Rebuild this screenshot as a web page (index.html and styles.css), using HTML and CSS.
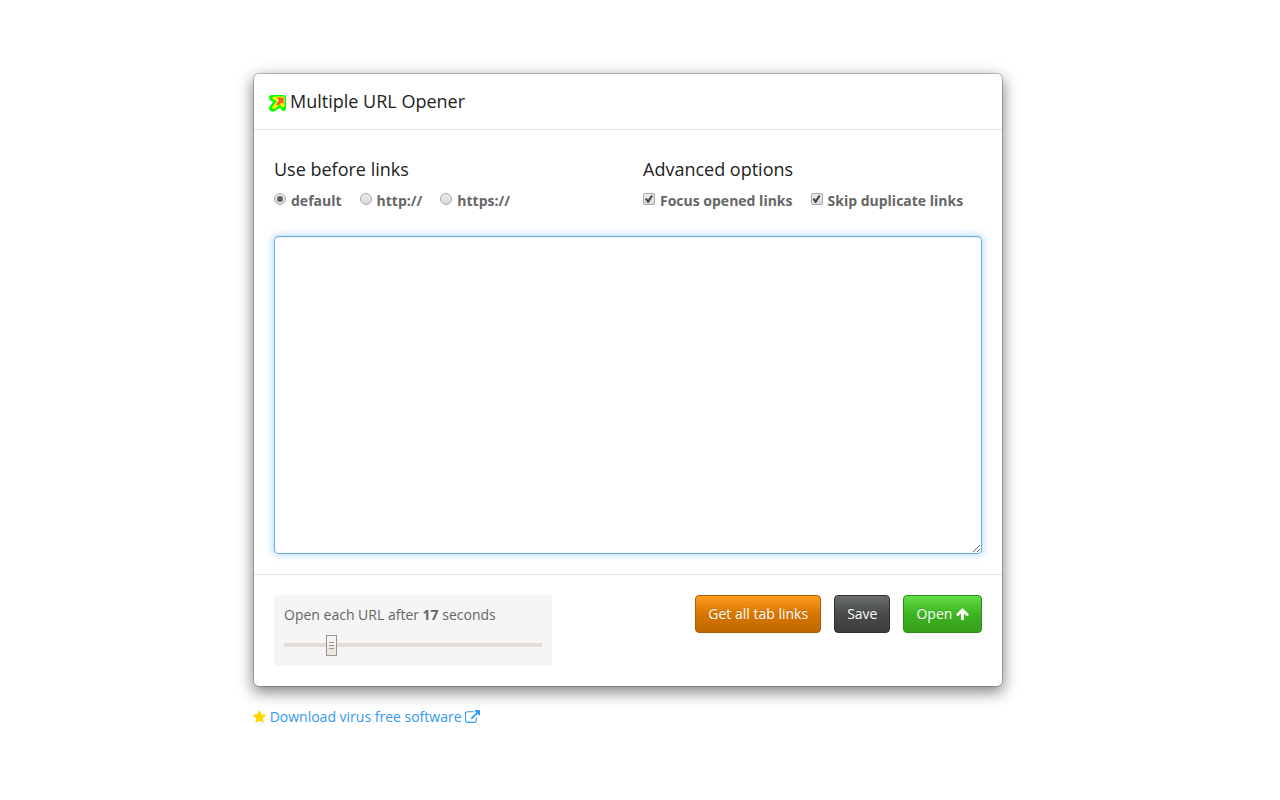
FILE: index.html
```
<!DOCTYPE html>
<html lang="en">
<head>
<meta charset="utf-8">
<title>Multiple URL Opener</title>
<link rel="stylesheet" href="styles.css">
</head>
<body>
<main class="page">
  <form class="dialog">
    <header class="dialog-header">
      <svg class="logo" viewBox="0 0 17 17" aria-hidden="true">
        <path fill="#0f0" d="M3 0H14Q17 0 17 3V13Q17 16 14.500 16Q12 16 11.500 12.500L6 16Q3 17.500 1 15.500Q-1 13 1 11L4.500 6.500Q0 6 0 3Q0 0 3 0Z"/>
        <path fill="#ff0" d="M4.500 1.500H15.500V11.500Q14 13 12.500 11.500L11.500 9.500L5.500 14Q3.500 14.500 3 12.500L8 6L4.500 4.500Q2.500 3 4.500 1.500Z"/>
        <path fill="#ff5038" d="M8 2.500H14.500V9L12.500 7.500L9.500 10.500L7 9.500L10 5.500Z"/>
      </svg>
      <h1 class="title">Multiple URL Opener</h1>
    </header>
    <div class="dialog-body">
      <div class="options">
        <fieldset class="group">
          <legend class="title">Use before links</legend>
          <div class="choices">
            <label class="choice"><input class="radio" type="radio" name="prefix" checked>default</label>
            <label class="choice"><input class="radio" type="radio" name="prefix">http://</label>
            <label class="choice"><input class="radio" type="radio" name="prefix">https://</label>
          </div>
        </fieldset>
        <fieldset class="group">
          <legend class="title">Advanced options</legend>
          <div class="choices">
            <label class="choice"><input class="check" type="checkbox" checked>Focus opened links</label>
            <label class="choice"><input class="check" type="checkbox" checked>Skip duplicate links</label>
          </div>
        </fieldset>
      </div>
      <textarea class="links" aria-label="Links"></textarea>
    </div>
    <footer class="dialog-footer">
      <div class="delay">
        <label for="delay">Open each URL after <strong>17</strong> seconds</label>
        <input class="slider" id="delay" type="range" min="0" max="100" value="17">
      </div>
      <div class="actions">
        <button class="btn btn-orange" type="button">Get all tab links</button>
        <button class="btn btn-dark" type="button">Save</button>
        <button class="btn btn-green" type="button">Open <svg class="icon-up" viewBox="53 150 1558 1514" aria-hidden="true"><path fill="currentColor" d="M1611 971q0 51-37 90l-75 75q-38 38-91 38-54 0-90-38l-294-293v704q0 52-37.500 84.500t-90.500 32.500h-128q-53 0-90.500-32.500t-37.500-84.500v-704l-294 293q-36 38-90 38t-90-38l-75-75q-38-38-38-90 0-53 38-91l651-651q35-37 90-37 54 0 91 37l651 651q37 39 37 91z"/></svg></button>
      </div>
    </footer>
  </form>
  <p class="promo">
    <svg class="icon-star" viewBox="0 32 1664 1587" aria-hidden="true"><path fill="gold" d="M1664 647q0 22-26 48l-363 354 86 500q1 7 1 20 0 21-10.500 35.500t-30.500 14.500q-19 0-40-12l-449-236-449 236q-22 12-40 12-21 0-31.500-14.500t-10.500-35.500q0-6 2-20l86-500-364-354q-25-27-25-48 0-37 56-46l502-73 225-455q19-41 49-41t49 41l225 455 502 73q56 9 56 46z"/></svg>
    <a class="promo-link" href="#">Download virus free software <svg class="icon-ext" viewBox="0 0 1792 1536" aria-hidden="true"><path fill="currentColor" d="M1408 928v320q0 119-84.500 203.500t-203.500 84.500h-832q-119 0-203.500-84.500t-84.500-203.500v-832q0-119 84.500-203.500t203.500-84.500h704q14 0 23 9t9 23v64q0 14-9 23t-23 9h-704q-66 0-113 47t-47 113v832q0 66 47 113t113 47h832q66 0 113-47t47-113v-320q0-14 9-23t23-9h64q14 0 23 9t9 23zm384-864v512q0 26-19 45t-45 19-45-19l-176-176-652 652q-10 10-23 10t-23-10l-114-114q-10-10-10-23t10-23l652-652-176-176q-19-19-19-45t19-45 45-19h512q26 0 45 19t19 45z"/></svg></a>
  </p>
</main>
</body>
</html>
```
FILE: styles.css
```
* { box-sizing: border-box; }
body {
  margin: 0;
  padding: 73px 24px 20px 0;
  background: #fff;
  color: #666;
  font: 14px/20px "Open Sans", sans-serif;
}
.page { max-width: 750px; margin: 0 auto; }
.dialog {
  background: #fff;
  border: 1px solid rgba(0, 0, 0, .2);
  border-radius: 6px;
  background-clip: padding-box;
  box-shadow: 0 5px 15px rgba(0, 0, 0, .5);
}
.dialog-header {
  display: flex;
  align-items: center;
  gap: 4px;
  padding: 15px;
  border-bottom: 1px solid #e5e5e5;
}
.logo { width: 17px; height: 17px; margin-top: 3px; }
.title {
  margin: 0;
  padding: 0;
  color: #222;
  font-size: 18px;
  font-weight: 400;
  line-height: 25px;
}
.dialog-body { padding: 27px 20px 20px; }
.options { display: grid; grid-template-columns: 369px 1fr; margin-bottom: 25px; }
.group { margin: 0; padding: 0; border: 0; min-width: 0; }
.choices { display: flex; gap: 18px; padding-top: 9px; }
.choice { display: flex; gap: 4px; font-weight: 700; white-space: nowrap; }
.radio, .check {
  appearance: none;
  display: grid;
  place-items: center;
  width: 13px;
  height: 13px;
  margin: 2px 0 0;
  border: 1px solid #a8a8a8;
  background: linear-gradient(#ececec, #dadada);
}
.radio { width: 12px; height: 12px; margin-right: 1px; border-radius: 50%; }
.check { width: 12px; height: 12px; margin-right: 1px; border-radius: 2px; }
.radio:checked::before {
  content: "";
  width: 6px;
  height: 6px;
  border-radius: 50%;
  background: #606060;
}
.check:checked::before {
  content: "";
  width: 8px;
  height: 8px;
  background: #444;
  clip-path: polygon(0 50%, 20% 36%, 38% 58%, 80% 0, 100% 12%, 44% 100%, 34% 100%);
}
.links {
  display: block;
  width: 100%;
  height: 318px;
  padding: 8px 12px;
  border: 1px solid #66afe9;
  border-radius: 4px;
  outline: 0;
  color: #666;
  font: inherit;
  resize: vertical;
  box-shadow: inset 0 1px 1px rgba(0, 0, 0, .075), 0 0 8px rgba(102, 175, 233, .6);
}
.dialog-footer {
  display: flex;
  justify-content: space-between;
  align-items: flex-start;
  padding: 20px;
  border-top: 1px solid #e5e5e5;
}
.delay {
  flex: 0 1 278px;
  padding: 10px;
  border-radius: 4px;
  background: #f5f5f5;
}
.delay label { display: block; }
.slider {
  appearance: none;
  display: block;
  width: 100%;
  height: 21px;
  margin: 10px 0 0;
  background: linear-gradient(#e2ddd6, #e2ddd6) 0 8px / 100% 4px no-repeat;
}
.slider::-webkit-slider-thumb {
  appearance: none;
  width: 11px;
  height: 21px;
  border: 1px solid #9b948c;
  background:
    linear-gradient(#9b948c, #9b948c) 2px 6px / 5px 1px no-repeat,
    linear-gradient(#9b948c, #9b948c) 2px 9px / 5px 1px no-repeat,
    linear-gradient(#9b948c, #9b948c) 2px 12px / 5px 1px no-repeat,
    linear-gradient(#f6f4f1 50%, #ebe7e2 50%);
}
.actions { display: flex; gap: 13px; }
.btn {
  padding: 8px 12px;
  border: 1px solid;
  border-radius: 4px;
  color: #fff;
  font: inherit;
  white-space: nowrap;
  text-shadow: 0 -1px 0 rgba(0, 0, 0, .15);
}
.btn-orange { border-color: #a65c00; background: linear-gradient(#ff9c21, #d87600 50%, #bf6900); }
.btn-dark { border-color: #2e2f2f; background: linear-gradient(#6a6d6d, #484a4a 50%, #3c3e3e); }
.btn-green { border-color: #2e8a19; background: linear-gradient(#61dd45, #3db421 50%, #36a01d); }
.icon-up { width: 13px; height: 12px; vertical-align: -1px; }
.promo { margin: 20px 0 0; }
.icon-star { width: 13px; height: 13px; vertical-align: -1px; }
.promo-link { color: #3399f3; text-decoration: none; }
.icon-ext { width: 15px; height: 13px; vertical-align: -1px; }
```
